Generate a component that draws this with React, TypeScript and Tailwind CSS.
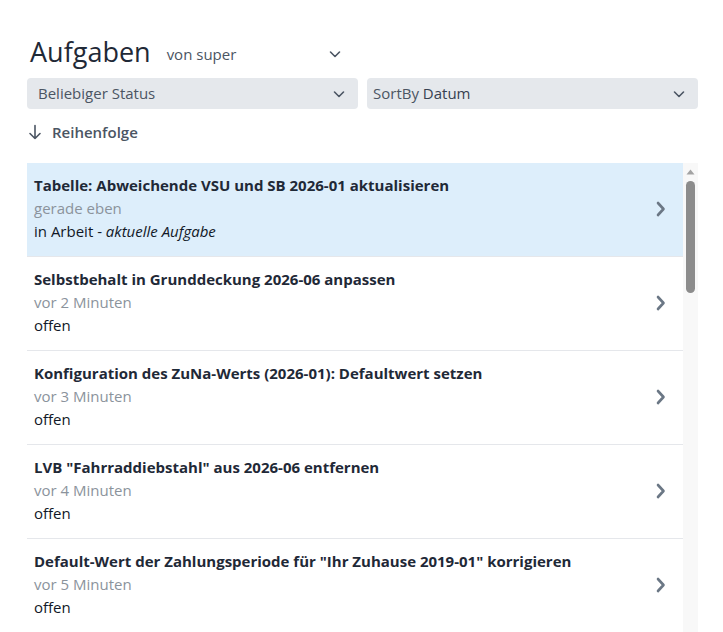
import React from "react";

const items = [
  { t: "Tabelle: Abweichende VSU und SB 2026-01 aktualisieren", s: "gerade eben", st: "in Arbeit", cur: true },
  { t: "Selbstbehalt in Grunddeckung 2026-06 anpassen", s: "vor 2 Minuten", st: "offen" },
  { t: "Konfiguration des ZuNa-Werts (2026-01): Defaultwert setzen", s: "vor 3 Minuten", st: "offen" },
  { t: "LVB \"Fahrraddiebstahl\" aus 2026-06 entfernen", s: "vor 4 Minuten", st: "offen" },
  { t: "Default-Wert der Zahlungsperiode für \"Ihr Zuhause 2019-01\" korrigieren", s: "vor 5 Minuten", st: "offen" },
];

function ChevronDown({ className }: { className?: string }) {
  return (
    <svg className={className} width="14" height="14" viewBox="0 0 14 14" fill="none" stroke="currentColor" strokeWidth="1.6" strokeLinecap="round" strokeLinejoin="round">
      <path d="M2.5 5l4.5 4.5L11.5 5" />
    </svg>
  );
}

function ChevronRight() {
  return (
    <svg width="13" height="18" viewBox="0 0 13 18" fill="none" stroke="#6b7785" strokeWidth="2.6" strokeLinecap="round" strokeLinejoin="round">
      <path d="M4 3l5.5 6-5.5 6" />
    </svg>
  );
}

export default function App() {
  return (
    <div className="bg-white h-[632px] overflow-hidden" style={{ fontFamily: '"Open Sans", "Noto Sans", sans-serif' }}>
      <div className="pl-[27px] pr-[25px] pt-[33px]">
        <div className="flex items-center h-[38px]">
          <span className="pl-[3px] text-[27px] leading-[38px] text-[#1f2937]">Aufgaben</span>
          <div className="ml-[16px] w-[175px] flex items-center justify-between pt-[4px]">
            <span className="text-[15px] text-[#4b5563]">von super</span>
            <ChevronDown className="text-[#4b5563]" />
          </div>
        </div>
        <div className="mt-[7px] grid grid-cols-2 gap-[9px]">
          <div className="h-[31px] rounded bg-[#e5e8ec] flex items-center justify-between pl-[11px] pr-[12px]">
            <span className="text-[15px] text-[#4b5563]">Beliebiger Status</span>
            <ChevronDown className="text-[#4b5563]" />
          </div>
          <div className="h-[31px] rounded bg-[#e5e8ec] flex items-center justify-between pl-[6px] pr-[12px]">
            <span className="text-[15px] text-[#4b5563]">SortBy <span className="text-[#374151]">Datum</span></span>
            <ChevronDown className="text-[#4b5563]" />
          </div>
        </div>
        <div className="mt-[11px] flex items-center h-[24px] text-[#4b5563]">
          <svg width="14" height="16" viewBox="0 0 14 16" fill="none" stroke="currentColor" strokeWidth="1.6" strokeLinecap="round" strokeLinejoin="round" className="ml-[1px]">
            <path d="M7 1.5v13M2 9.5l5 5 5-5" />
          </svg>
          <span className="ml-[10px] text-[15px] font-semibold">Reihenfolge</span>
        </div>
        <div className="mt-[19px] flex h-[500px]">
          <div className="flex-1 overflow-hidden">
            {items.map((it, i) => (
              <div
                key={i}
                className={`flex items-center justify-between pl-[7px] pr-[16px] pt-[11px] pb-[13px] border-b border-[#e5e7eb] ${it.cur ? "bg-[#ddeefb]" : ""}`}
              >
                <div className="text-[15px] leading-[23px]">
                  <div className="font-bold text-[#1f2937]">{it.t}</div>
                  <div className="text-[#8b939c]">{it.s}</div>
                  <div className="text-[#111827]">
                    {it.st}
                    {it.cur && <span> - <i>aktuelle Aufgabe</i></span>}
                  </div>
                </div>
                <ChevronRight />
              </div>
            ))}
          </div>
          <div className="w-[15px] bg-[#f8f8f8] flex flex-col items-center pt-[6px]">
            <svg width="9" height="6" viewBox="0 0 9 6"><path d="M4.5 0.5L8.5 5.5H0.5Z" fill="#a3a3a3" /></svg>
            <div className="mt-[6px] w-[9px] h-[112px] rounded-full bg-[#8c8c8c]" />
          </div>
        </div>
      </div>
    </div>
  );
}
